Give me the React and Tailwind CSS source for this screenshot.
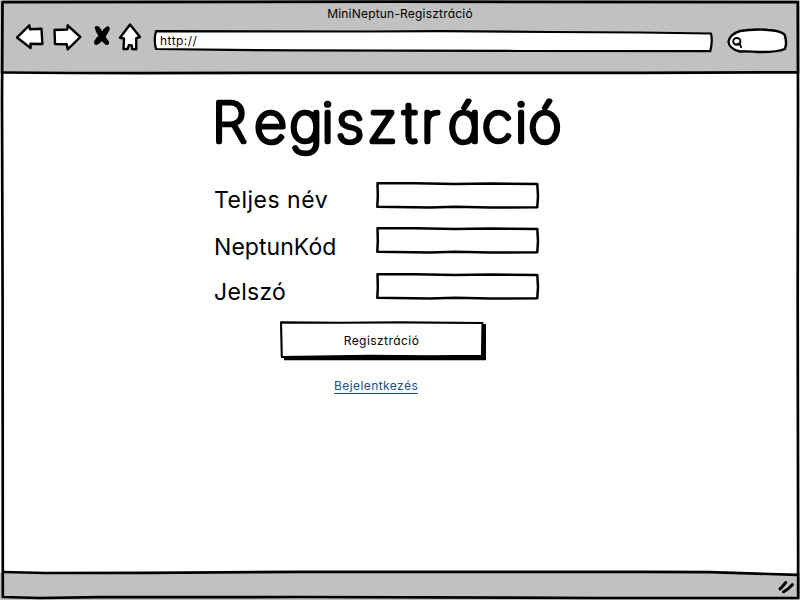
const ink = { stroke: "#000", strokeWidth: 2.4, strokeLinejoin: "round", strokeLinecap: "round", fill: "#fff" };

function BackIcon() {
  return (
    <svg className="h-7 w-7 shrink-0" viewBox="16 23 28 28" {...ink}>
      <path d="M17 37.5 L29.3 25.3 L30 29.2 L41.5 28.8 L42.4 44 L30.5 43.8 L30.6 48 Z" />
    </svg>
  );
}

function ForwardIcon() {
  return (
    <svg className="h-7 w-[29px] shrink-0" viewBox="53 23 29 28" {...ink}>
      <path d="M54.5 30 L67.3 29.5 L67.7 25.3 L80.3 37 L67.7 49.3 L66.7 44.3 L55 44 L54.8 37 Z" />
    </svg>
  );
}

function StopIcon() {
  return (
    <svg className="h-7 w-[18px] shrink-0" viewBox="93 23 18 28" stroke="#000" strokeWidth="1.4" strokeLinejoin="round" fill="#000">
      <path d="M95.3 27.5 Q96.5 26.2 98.5 27.2 Q101 30 102.3 32.8 Q104.3 28.5 107.5 27 Q109.5 26.8 109 29.5 Q107.5 33 104.8 36.5 Q106.3 39.5 108.3 42 Q108.8 44.5 106.5 44.4 Q103.8 42.5 101.8 40 Q99.8 42.8 96.8 44.2 Q94.2 44.3 94.8 41.5 Q96.5 38 99.3 35.7 Q96 31.5 95.3 27.5 Z" />
    </svg>
  );
}

function HomeIcon() {
  return (
    <svg className="h-7 w-6 shrink-0" viewBox="118 23 24 28" {...ink}>
      <path d="M130 24.5 L140 37 L136.3 38.2 L136.2 49.2 L132.2 49 L131.8 45.4 L128.8 45.2 L127.8 49 L123.5 49 L124 38.5 L120 37.7 Z" />
    </svg>
  );
}

function Field({ label, className, tracking }) {
  return (
    <div className={"flex items-start " + className}>
      <label className={"w-[161px] shrink-0 pt-1 text-[23px] leading-[30px] " + tracking}>{label}</label>
      <svg className="h-7 w-[165px] shrink-0" viewBox="375 181 165 28" fill="#fff" stroke="#000" strokeLinejoin="round">
        <path strokeWidth="2.5" d="M377.5 183.2 L415 183.2 L455 184 L490 183.4 L537.3 184 L538 196 L537.3 207.2 L490 207.6 L455 206.8 L430 207.5 L377.3 206.8 L377.8 196 Z" />
      </svg>
    </div>
  );
}

export default function App() {
  return (
    <div className="relative flex h-[600px] w-[800px] flex-col overflow-hidden bg-white font-['Inter','Noto_Sans',sans-serif] text-black [font-feature-settings:'cv11']">
      <header className="flex h-[73px] flex-col bg-[#c1c1c1]">
        <h2 className="pt-[6px] text-center text-[12px] leading-4 tracking-[0.2px]">MiniNeptun-Regisztráció</h2>
        <nav className="mt-px flex items-start pl-4">
          <BackIcon />
          <div className="ml-[9px] flex"><ForwardIcon /></div>
          <div className="ml-[11px] flex"><StopIcon /></div>
          <div className="ml-[7px] flex"><HomeIcon /></div>
          <div className="relative ml-[11px] mt-[6px] h-6 w-[561px] shrink-0">
            <svg className="absolute inset-0 h-full w-full" viewBox="153 29 561 24" fill="#fff" stroke="#000" strokeWidth="2.2" strokeLinejoin="round">
              <path d="M156 31.2 L370 31.5 L440 31.2 L550 32 L640 32.5 L711 33.5 Q712.8 41 710.3 51.2 L520 51 L400 50.6 L300 50.3 L230 49.9 L156 49 Q153.5 40 156 31.2 Z" />
            </svg>
            <span className="relative ml-[7px] block text-[12px] leading-[23px] tracking-[0.45px]">http://</span>
          </div>
          <svg className="ml-[13px] mt-[4px] h-7 w-[61px] shrink-0" viewBox="727 27 61 28" {...ink}>
            <path d="M740 31 Q754 28.5 768 30 Q780 30.5 784.5 34.5 Q787.5 43 784.8 49 Q776 52.5 758 52 Q750 51 740 51.5 Q729 49 728.5 41.5 Q730 34 740 31 Z" />
            <ellipse cx="736.8" cy="41.3" rx="3.6" ry="3.4" strokeWidth="2" />
            <path d="M737.5 43.8 L740 44.5 L741 47" strokeWidth="2" fill="none" />
          </svg>
        </nav>
      </header>

      <main className="flex flex-1 flex-col pl-[214px]">
        <h1 className="-ml-[14px] mt-[12px] h-[76px]">
          <svg className="h-[76px] w-[380px] overflow-visible" viewBox="200 85 380 76" fill="#000" stroke="#000" strokeWidth="4.6" strokeLinejoin="round">
            <text transform="scale(1.05 1)" y="141.8" x="201.8 242.1 275.7 306.3 320 350 383.8 401.3 426.7 459 490.6 503.3" fontSize="54" fontWeight="100">Regisztráció</text>
          </svg>
        </h1>
        <Field label="Teljes név" className="mt-5 h-[45px]" tracking="tracking-[0.5px]" />
        <Field label="NeptunKód" className="h-[46px] [&>label]:pt-[6px]" tracking="tracking-[0.05px]" />
        <Field label="Jelszó" className="h-[48px] [&>label]:pt-[5px]" tracking="tracking-[0.3px]" />
        <button className="relative ml-[65px] h-[41px] w-[209px] text-[12px] leading-4">
          <svg className="absolute inset-0 h-full w-full" viewBox="279 320 209 41" strokeLinejoin="round">
            <path d="M283.5 325 L486 324 L486 360.3 L284 360.3 Z" fill="#000" />
            <path d="M281 322.4 L340 322.7 L400 322.4 L482.5 323 L482 355.9 L430 356.2 L370 355.9 L281.8 357 Z" fill="#fff" stroke="#000" strokeWidth="2.1" />
          </svg>
          <span className="relative -left-0.5 tracking-[0.45px]">Regisztráció</span>
        </button>
        <a className="ml-[120px] mt-[18px] w-fit border-b border-[#174f8a] text-[12px] leading-[14px] tracking-[0.43px] text-[#174f8a]">Bejelentkezés</a>
      </main>

      <footer className="flex h-[27px] items-center justify-end bg-[#c1c1c1] pr-[4px]">
        <svg className="h-4 w-[18px]" viewBox="778 579 18 16" stroke="#000" strokeWidth="3" strokeLinecap="round" fill="none">
          <path d="M780 589 Q783 586 785.7 582.5 M783.5 591.8 Q788 589.5 792.3 584.7" />
        </svg>
      </footer>

      <svg className="pointer-events-none absolute inset-0 h-full w-full" viewBox="0 0 800 600" fill="none" stroke="#000" strokeWidth="2.7" strokeLinejoin="round">
        <path d="M4 571 L796 571 L796 574 L640 571 Z" fill="#fff" stroke="none" />
        <path d="M2.5 2.2 L400 1.7 L797.8 2.2 L798 100 L797.7 300 L798.2 598 L600 598 L300 597 L100 597.2 L40 598 L2.8 597 L2.6 300 L2 100 Z" />
        <path d="M3 72.5 L70 73 L140 73.2 L300 72.8 L440 72.8 L640 72.8 L797 72.3" />
        <path d="M3 572 L45 573 L147 572.8 L300 571.8 L640 571.8 L710 572.2 L797 574.8" />
      </svg>
    </div>
  );
}
